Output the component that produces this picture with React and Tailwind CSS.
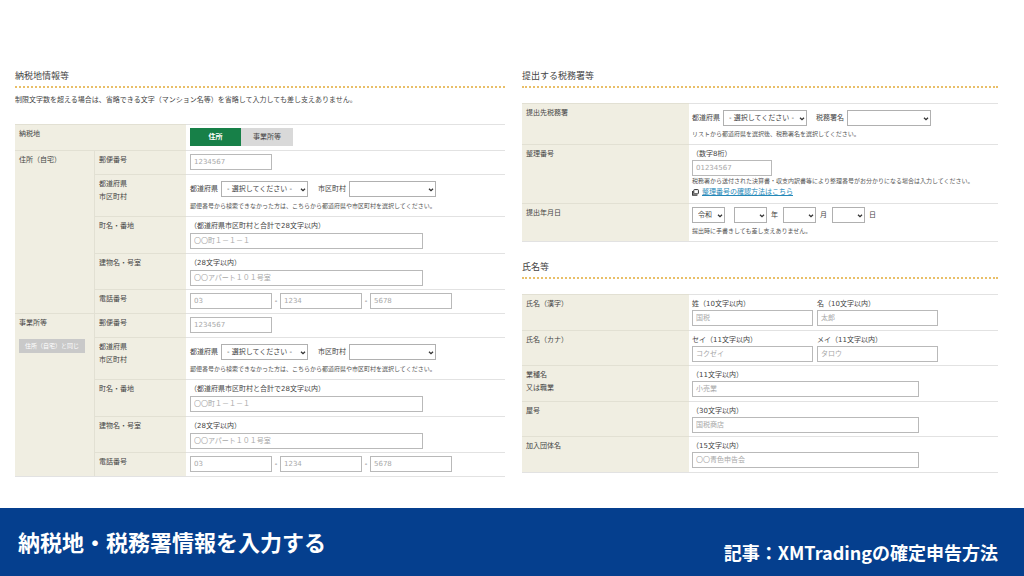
import React from "react";

const HEAD_CELL =
  "border-t border-[#e2e0d3] bg-[#f0eee2] px-1 pt-[3px] text-left align-top font-normal leading-[13px]";
const BODY_CELL = "border-t border-[#e2e2e2] align-top";

function TextField({ label, placeholder, width }) {
  return (
    <input
      type="text"
      aria-label={label}
      placeholder={placeholder}
      className={`block h-4 border border-[#b9b9b9] bg-white px-[3px] text-[7px] leading-[14px] text-[#444] outline-none placeholder:text-[#a8a8a8] placeholder:opacity-100 ${width}`}
    />
  );
}

function SelectField({ label, id, option = "", width }) {
  return (
    <span className={`relative block ${width}`}>
      <select
        id={id}
        aria-label={label}
        className="block h-4 w-full appearance-none border border-[#b0b0b0] bg-white pl-[5px] pr-2 text-[7px] leading-[14px] text-[#444] outline-none"
      >
        <option>{option}</option>
      </select>
      <svg
        viewBox="0 0 6 4"
        className="pointer-events-none absolute right-[2px] top-[7px] h-1 w-[6px]"
        aria-hidden="true"
      >
        <path d="M1 0.7 L3 2.6 L5 0.7" fill="none" stroke="#333" strokeWidth="1.3" />
      </svg>
    </span>
  );
}

function SectionHeading({ children }) {
  return (
    <h2 className="border-b-2 border-dotted border-[#e9bf68] pb-[2px] text-[9px] leading-4 text-[#444]">
      {children}
    </h2>
  );
}

function Note({ children }) {
  return <p className="whitespace-nowrap text-[6px] leading-[9px] text-[#555]">{children}</p>;
}

function AddressRows({ prefix, lead }) {
  return (
    <>
      <tr className="h-6">
        {lead}
        <th scope="row" className={HEAD_CELL}>郵便番号</th>
        <td className={`${BODY_CELL} pl-1 pt-[3px]`}>
          <TextField label="郵便番号" placeholder="1234567" width="w-[82px]" />
        </td>
      </tr>
      <tr className="h-[42px]">
        <th scope="row" className={HEAD_CELL}>
          都道府県
          <br />
          市区町村
        </th>
        <td className={`${BODY_CELL} pl-1 pt-[6px]`}>
          <div className="mb-1 flex items-center gap-[3px]">
            <label htmlFor={`${prefix}-pref`}>都道府県</label>
            <SelectField id={`${prefix}-pref`} option="- 選択してください -" width="w-[87px]" />
            <label htmlFor={`${prefix}-city`} className="ml-[7px]">市区町村</label>
            <SelectField id={`${prefix}-city`} width="w-[87px]" />
          </div>
          <Note>郵便番号から検索できなかった方は、こちらから都道府県や市区町村を選択してください。</Note>
        </td>
      </tr>
      <tr className="h-[37px]">
        <th scope="row" className={HEAD_CELL}>町名・番地</th>
        <td className={`${BODY_CELL} pl-1 pt-[3px]`}>
          <p className="leading-[13px]">（都道府県市区町村と合計で28文字以内）</p>
          <TextField label="町名・番地" placeholder="〇〇町１－１－１" width="w-[233px]" />
        </td>
      </tr>
      <tr className="h-9">
        <th scope="row" className={HEAD_CELL}>建物名・号室</th>
        <td className={`${BODY_CELL} pl-1 pt-[3px]`}>
          <p className="leading-[13px]">（28文字以内）</p>
          <TextField label="建物名・号室" placeholder="〇〇アパート１０１号室" width="w-[233px]" />
        </td>
      </tr>
      <tr className="h-6">
        <th scope="row" className={HEAD_CELL}>電話番号</th>
        <td className={`${BODY_CELL} pl-1 pt-[3px]`}>
          <div className="flex items-center">
            <TextField label="市外局番" placeholder="03" width="w-[82px]" />
            <span className="w-2 text-center">-</span>
            <TextField label="市内局番" placeholder="1234" width="w-[82px]" />
            <span className="w-2 text-center">-</span>
            <TextField label="加入者番号" placeholder="5678" width="w-[82px]" />
          </div>
        </td>
      </tr>
    </>
  );
}

function TaxPlaceSection() {
  return (
    <section>
      <SectionHeading>納税地情報等</SectionHeading>
      <p className="mb-[17px] mt-[6px] whitespace-nowrap leading-[13px]">
        制限文字数を超える場合は、省略できる文字（マンション名等）を省略して入力しても差し支えありません。
      </p>
      <table className="w-full table-fixed border-separate border-spacing-0 border-b border-[#e2e2e2]">
        <colgroup>
          <col className="w-20" />
          <col className="w-[91px]" />
          <col />
        </colgroup>
        <tbody>
          <tr className="h-[26px]">
            <th scope="row" colSpan={2} className={HEAD_CELL}>納税地</th>
            <td className={`${BODY_CELL} pl-1 pt-[3px]`}>
              <div className="flex">
                <button type="button" className="h-[18px] w-[51px] bg-[#178048] text-[7px] font-bold text-white">
                  住所
                </button>
                <button type="button" className="h-[18px] w-[52px] bg-[#d9d9d9] text-[7px] text-[#444]">
                  事業所等
                </button>
              </div>
            </td>
          </tr>
          <AddressRows
            prefix="home"
            lead={
              <th scope="rowgroup" rowSpan={5} className={`${HEAD_CELL} border-r`}>
                住所（自宅）
              </th>
            }
          />
          <AddressRows
            prefix="office"
            lead={
              <th scope="rowgroup" rowSpan={5} className={`${HEAD_CELL} border-r`}>
                事業所等
                <button
                  type="button"
                  className="mt-[9px] block h-[14px] w-[66px] whitespace-nowrap bg-[#c9c9c9] text-[6px] leading-[14px] text-white"
                >
                  住所（自宅）と同じ
                </button>
              </th>
            }
          />
        </tbody>
      </table>
    </section>
  );
}

function DetailTable({ children }) {
  return (
    <table className="mt-[15px] w-full table-fixed border-separate border-spacing-0 border-b border-[#e2e2e2]">
      <colgroup>
        <col className="w-[167px]" />
        <col />
      </colgroup>
      <tbody>{children}</tbody>
    </table>
  );
}

function TaxOfficeSection() {
  return (
    <section>
      <SectionHeading>提出する税務署等</SectionHeading>
      <DetailTable>
        <tr className="h-[41px]">
          <th scope="row" className={HEAD_CELL}>提出先税務署</th>
          <td className={`${BODY_CELL} pl-[3px] pt-[6px]`}>
            <div className="mb-[3px] flex items-center gap-[3px]">
              <label htmlFor="office-area">都道府県</label>
              <SelectField id="office-area" option="- 選択してください -" width="w-[84px]" />
              <label htmlFor="office-name" className="ml-[6px]">税務署名</label>
              <SelectField id="office-name" width="w-[84px]" />
            </div>
            <Note>リストから都道府県を選択後、税務署名を選択してください。</Note>
          </td>
        </tr>
        <tr className="h-[59px]">
          <th scope="row" className={HEAD_CELL}>整理番号</th>
          <td className={`${BODY_CELL} pl-[3px] pt-[3px]`}>
            <p className="leading-3">（数字8桁）</p>
            <TextField label="整理番号" placeholder="01234567" width="w-20" />
            <Note>税務署から送付された決算書・収支内訳書等により整理番号がお分かりになる場合は入力してください。</Note>
            <div className="flex items-center gap-[3px] leading-[14px]">
              <svg viewBox="0 0 7 7" className="h-[7px] w-[7px]" aria-hidden="true">
                <rect x="1.8" y="0.6" width="4.6" height="4.2" rx="0.6" fill="none" stroke="#333" strokeWidth="1" />
                <path d="M0.7 2 V6.2 H5.4" fill="none" stroke="#333" strokeWidth="1.3" strokeLinejoin="round" />
              </svg>
              <a href="#number" className="text-[#2588b8] underline">整理番号の確認方法はこちら</a>
            </div>
          </td>
        </tr>
        <tr className="h-[38px]">
          <th scope="row" className={HEAD_CELL}>提出年月日</th>
          <td className={`${BODY_CELL} pl-[3px] pt-[3px]`}>
            <div className="mb-[3px] flex items-center gap-1">
              <SelectField label="元号" option="令和" width="w-[33px]" />
              <span className="w-px" />
              <SelectField label="年" width="w-[33px]" />
              <span>年</span>
              <SelectField label="月" width="ml-px w-[33px]" />
              <span>月</span>
              <SelectField label="日" width="ml-px w-[33px]" />
              <span>日</span>
            </div>
            <Note>提出時に手書きしても差し支えありません。</Note>
          </td>
        </tr>
      </DetailTable>
    </section>
  );
}

function HintedField({ hint, label, placeholder, width }) {
  return (
    <div>
      <p className="whitespace-nowrap leading-3">{hint}</p>
      <TextField label={label} placeholder={placeholder} width={width} />
    </div>
  );
}

function NameSection() {
  return (
    <section className="mt-[17px]">
      <SectionHeading>氏名等</SectionHeading>
      <DetailTable>
        <tr className="h-9">
          <th scope="row" className={HEAD_CELL}>氏名（漢字）</th>
          <td className={`${BODY_CELL} pl-[3px] pt-[3px]`}>
            <div className="flex gap-1">
              <HintedField hint="姓（10文字以内）" label="姓" placeholder="国税" width="w-[121px]" />
              <HintedField hint="名（10文字以内）" label="名" placeholder="太郎" width="w-[121px]" />
            </div>
          </td>
        </tr>
        <tr className="h-[35px]">
          <th scope="row" className={HEAD_CELL}>氏名（カナ）</th>
          <td className={`${BODY_CELL} pl-[3px] pt-[3px]`}>
            <div className="flex gap-1">
              <HintedField hint="セイ（11文字以内）" label="セイ" placeholder="コクゼイ" width="w-[121px]" />
              <HintedField hint="メイ（11文字以内）" label="メイ" placeholder="タロウ" width="w-[121px]" />
            </div>
          </td>
        </tr>
        <tr className="h-9">
          <th scope="row" className={HEAD_CELL}>
            業種名
            <br />
            又は職業
          </th>
          <td className={`${BODY_CELL} pl-[3px] pt-[3px]`}>
            <HintedField hint="（11文字以内）" label="業種名又は職業" placeholder="小売業" width="w-[227px]" />
          </td>
        </tr>
        <tr className="h-[35px]">
          <th scope="row" className={HEAD_CELL}>屋号</th>
          <td className={`${BODY_CELL} pl-[3px] pt-[3px]`}>
            <HintedField hint="（30文字以内）" label="屋号" placeholder="国税商店" width="w-[227px]" />
          </td>
        </tr>
        <tr className="h-9">
          <th scope="row" className={HEAD_CELL}>加入団体名</th>
          <td className={`${BODY_CELL} pl-[3px] pt-[3px]`}>
            <HintedField hint="（15文字以内）" label="加入団体名" placeholder="〇〇青色申告会" width="w-[227px]" />
          </td>
        </tr>
      </DetailTable>
    </section>
  );
}

export default function App() {
  return (
    <div
      lang="ja"
      className="flex min-h-screen flex-col bg-white font-['DejaVu_Sans','Noto_Sans_CJK_JP',sans-serif] text-[7px] text-[#444]"
    >
      <main className="grid flex-1 grid-cols-[490fr_476fr] items-start gap-[17px] pl-[15px] pr-[26px] pt-[68px]">
        <TaxPlaceSection />
        <div>
          <TaxOfficeSection />
          <NameSection />
        </div>
      </main>
      <footer className="flex items-end justify-between bg-[#053f8e] pb-[13px] pl-[18px] pr-[26px] pt-[11px] font-['Noto_Sans_CJK_JP',sans-serif] font-bold text-white">
        <h1 className="text-[22px] leading-[44px]">納税地・税務署情報を入力する</h1>
        <p className="text-lg leading-[22px]">記事：XMTradingの確定申告方法</p>
      </footer>
    </div>
  );
}
